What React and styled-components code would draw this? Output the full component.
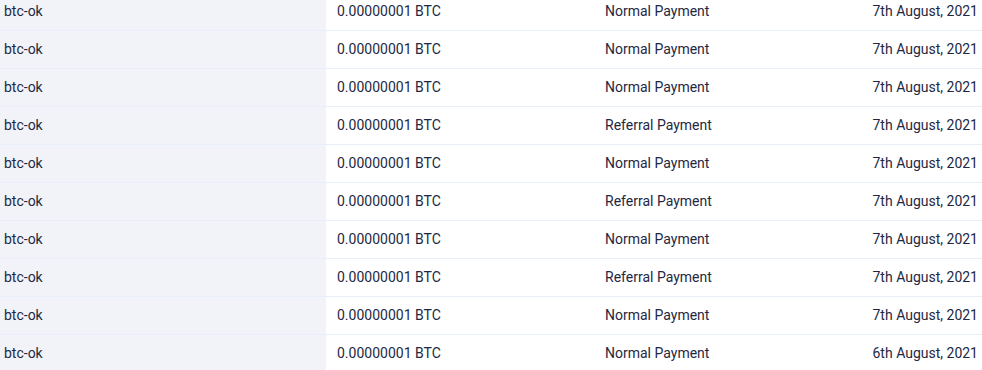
import React from 'react'
import styled, { createGlobalStyle } from 'styled-components'

const Global = createGlobalStyle`
  body {
    margin: 0;
    background: #fff;
    font-family: Roboto, 'Liberation Sans', sans-serif;
    overflow: hidden;
  }
`;

const Table = styled.div`
  margin-top: -8px;
  width: 982px;
`;

const Row = styled.div`
  display: grid;
  grid-template-columns: 326px 268px 1fr auto;
  height: 38px;
  border-top: 1px solid #e8effb;
  box-sizing: border-box;
  color: #1e2842;
  font-size: 14px;
`;

const Cell = styled.div`
  display: flex;
  align-items: center;
  padding: 0 ${props => props.right ? '4px' : '0'} 2px ${props => props.first ? '4px' : '11px'};
  background: ${props => props.first ? '#f1f3f8' : 'transparent'};
  justify-content: ${props => props.right ? 'flex-end' : 'flex-start'};
  white-space: nowrap;
`;

const rows = [
  ['Normal Payment', '7th August, 2021'],
  ['Normal Payment', '7th August, 2021'],
  ['Normal Payment', '7th August, 2021'],
  ['Referral Payment', '7th August, 2021'],
  ['Normal Payment', '7th August, 2021'],
  ['Referral Payment', '7th August, 2021'],
  ['Normal Payment', '7th August, 2021'],
  ['Referral Payment', '7th August, 2021'],
  ['Normal Payment', '7th August, 2021'],
  ['Normal Payment', '6th August, 2021'],
];

const App = () => {
  return (
    <>
      <Global />
      <Table>
        {rows.map(([type, date], i) => (
          <Row key={i}>
            <Cell first>btc-ok</Cell>
            <Cell>0.00000001 BTC</Cell>
            <Cell>{type}</Cell>
            <Cell right>{date}</Cell>
          </Row>
        ))}
      </Table>
    </>
  )
}

export default App
